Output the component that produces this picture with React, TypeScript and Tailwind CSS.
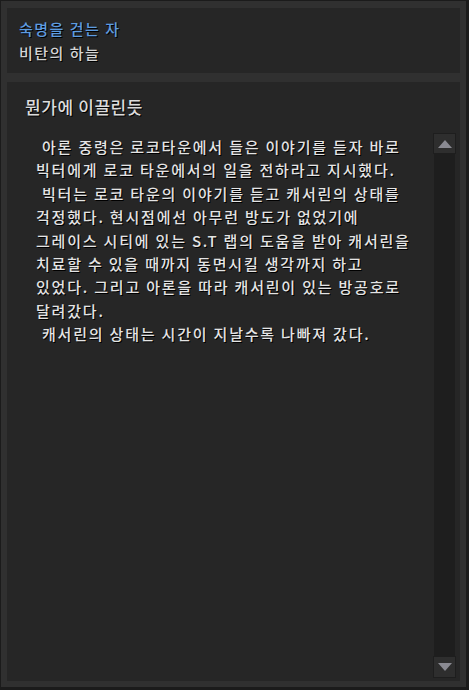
import React from "react";

const lines: { t: string; indent?: boolean }[] = [
  { t: "아론 중령은 로코타운에서 들은 이야기를 듣자 바로", indent: true },
  { t: "빅터에게 로코 타운에서의 일을 전하라고 지시했다." },
  { t: "빅터는 로코 타운의 이야기를 듣고 캐서린의 상태를", indent: true },
  { t: "걱정했다. 현시점에선 아무런 방도가 없었기에" },
  { t: "그레이스 시티에 있는 S.T 랩의 도움을 받아 캐서린을" },
  { t: "치료할 수 있을 때까지 동면시킬 생각까지 하고" },
  { t: "있었다. 그리고 아론을 따라 캐서린이 있는 방공호로" },
  { t: "달려갔다." },
  { t: "캐서린의 상태는 시간이 지날수록 나빠져 갔다.", indent: true },
];

export default function App() {
  const font = { fontFamily: '"Noto Sans CJK KR", "Noto Sans", sans-serif' };
  return (
    <div className="w-[469px] h-[690px] bg-[#1b1b1b] pl-[1px] pt-[1px]" style={font}>
      <div className="w-[465px] h-[686px] bg-[#303030] px-[6px] pt-[7px] flex flex-col gap-[9px]">
        <div className="h-[65px] bg-[#262626] pl-[12px] pt-[9px] flex flex-col">
          <div className="text-[15px] leading-[24px] font-medium tracking-[1.5px] text-[#5e9ce0] [text-shadow:1px_1px_0_#000]">
            숙명을 걷는 자
          </div>
          <div className="text-[15px] leading-[24px] font-medium tracking-[1.5px] text-[#d4d4d4] [text-shadow:1px_1px_0_#000]">
            비탄의 하늘
          </div>
        </div>
        <div className="h-[599px] bg-[#262626] flex">
          <div className="flex-1 flex flex-col">
            <div className="pl-[18px] pt-[12px] text-[17px] leading-[26px] font-medium tracking-[0.6px] text-[#dcdcdc] [text-shadow:1px_1px_0_#000]">
              뭔가에 이끌린듯
            </div>
            <div className="pl-[29px] pt-[15px] flex flex-col">
              {lines.map((l, i) => (
                <div
                  key={i}
                  className={`whitespace-pre text-[15px] leading-[23.4px] font-medium tracking-[1.8px] text-[#e4e4e4] [text-shadow:1px_1px_0_#000] ${l.indent ? "pl-[6px]" : ""}`}
                >
                  {l.t}
                </div>
              ))}
            </div>
          </div>
          <div className="w-[23px] mr-[4px] mt-[51px] mb-[3px] flex flex-col">
            <div className="h-[21px] bg-[#2e2e2e] border border-[#1e1e1e] flex items-center justify-center">
              <svg width="14" height="8" viewBox="0 0 14 8">
                <polygon points="7,0 14,8 0,8" fill="#8a8a92" />
              </svg>
            </div>
            <div className="flex-1 bg-[#1e1e1e] mx-[1px]" />
            <div className="h-[22px] bg-[#2e2e2e] border border-[#1e1e1e] flex items-center justify-center">
              <svg width="14" height="8" viewBox="0 0 14 8">
                <polygon points="0,0 14,0 7,8" fill="#8a8a92" />
              </svg>
            </div>
          </div>
        </div>
      </div>
    </div>
  );
}
